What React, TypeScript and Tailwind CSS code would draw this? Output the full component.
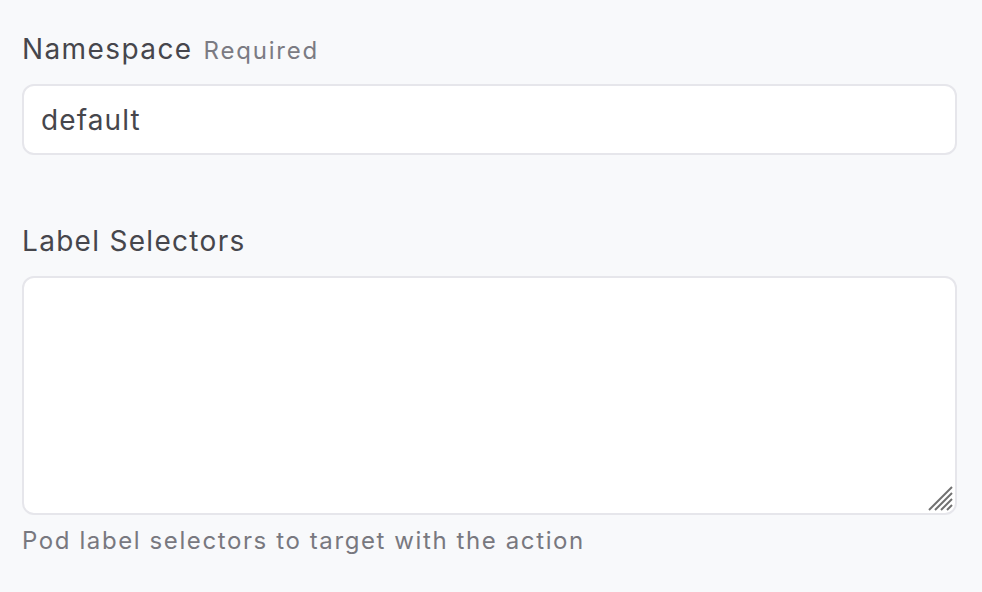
import { useState } from 'react';

export default function App() {
    const [namespace, setNamespace] = useState('default');
    const [selectors, setSelectors] = useState('');

    return (
        <div className="min-h-screen w-full bg-[#f8f9fb] pl-[22px] pr-[25px] pt-[30px] font-['Inter',sans-serif]">
            {/* Namespace */}
            <label className="flex items-baseline gap-[11px] leading-[38px]">
                <span className="text-[28px] tracking-[1.4px] text-[#46464c]">Namespace</span>
                <span className="text-[24px] tracking-[1.8px] text-[#7b7b83]">Required</span>
            </label>
            <input
                type="text"
                value={namespace}
                onChange={e => setNamespace(e.target.value)}
                className="mt-[14px] block w-full h-[71px] bg-white border-2 border-[#e6e6eb] rounded-[12px] px-[17px] text-[28px] tracking-[1.1px] text-[#46464c] focus:outline-none"
            />

            {/* Label Selectors */}
            <label className="mt-[67px] block text-[28px] leading-[38px] tracking-[1.3px] text-[#46464c]">Label Selectors</label>
            <div className="relative mt-[16px]">
                <textarea
                    value={selectors}
                    onChange={e => setSelectors(e.target.value)}
                    className="block w-full h-[239px] bg-white border-2 border-[#e6e6eb] rounded-[12px] px-[17px] py-[12px] text-[28px] text-[#46464c] resize-none focus:outline-none"
                />
                <svg className="absolute right-[4px] bottom-[4px]" width="26" height="26" viewBox="0 0 26 26">
                    <g stroke="#707070" strokeWidth="2">
                        <line x1="2" y1="25" x2="25" y2="2" />
                        <line x1="8" y1="25" x2="25" y2="8" />
                        <line x1="14" y1="25" x2="25" y2="14" />
                        <line x1="20" y1="25" x2="25" y2="20" />
                    </g>
                </svg>
            </div>
            <p className="mt-[8px] text-[24px] tracking-[1.6px] text-[#78787f]">Pod label selectors to target with the action</p>
        </div>
    );
}
